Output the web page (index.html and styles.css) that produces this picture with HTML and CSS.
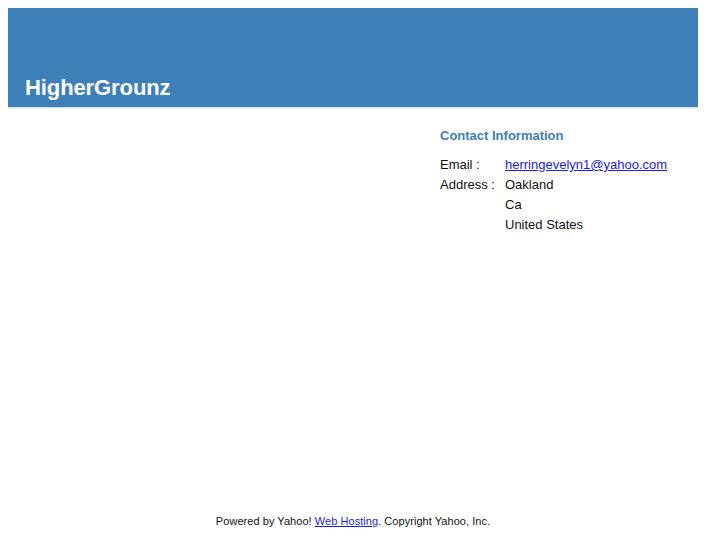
FILE: index.html
```html
<!DOCTYPE html>
<html>
<head>
<meta charset="utf-8">
<link rel="stylesheet" href="styles.css">
</head>
<body>
<div class="page">
  <div class="header">
    <h1 class="title">HigherGrounz</h1>
  </div>
  <div class="main">
    <div class="left"></div>
    <div class="contact">
      <h2 class="contact-title">Contact Information</h2>
      <div class="rows">
        <div class="label">Email :</div>
        <div class="value"><a href="#">herringevelyn1@yahoo.com</a></div>
        <div class="label">Address :</div>
        <div class="value">Oakland</div>
        <div class="label"></div>
        <div class="value">Ca</div>
        <div class="label"></div>
        <div class="value">United States</div>
      </div>
    </div>
  </div>
  <div class="footer">Powered by Yahoo! <a href="#">Web Hosting</a>. Copyright Yahoo, Inc.</div>
</div>
</body>
</html>
```
FILE: styles.css
```css
body {
  margin: 8px;
  font-family: "Liberation Sans", Arial, sans-serif;
  color: #111;
  background: #fff;
}
.page {
  width: 690px;
  height: 529px;
  display: flex;
  flex-direction: column;
}
.header {
  background: #3c7fb9;
  height: 100px;
  display: flex;
  align-items: flex-end;
  padding: 0 17px 7px;
  box-sizing: border-box;
  border-bottom: 1px solid #cfe0ef;
}
.title {
  margin: 0;
  color: #fff;
  font-size: 22px;
  font-weight: bold;
  line-height: 24px;
  letter-spacing: -0.1px;
}
.main {
  display: flex;
  flex: 1;
}
.left {
  width: 432px;
}
.contact {
  padding-top: 20px;
}
.contact-title {
  margin: 0 0 11px;
  font-size: 13px;
  font-weight: bold;
  color: #3c7fb9;
  line-height: 16px;
}
.rows {
  display: grid;
  grid-template-columns: 65px auto;
  font-size: 13px;
  line-height: 20px;
}
.rows a {
  color: #1a1ae6;
}
.footer {
  text-align: center;
  font-size: 11px;
  line-height: 14px;
  padding-bottom: 9px;
  letter-spacing: 0.05px;
}
.footer a {
  color: #1a1ae6;
}
```
